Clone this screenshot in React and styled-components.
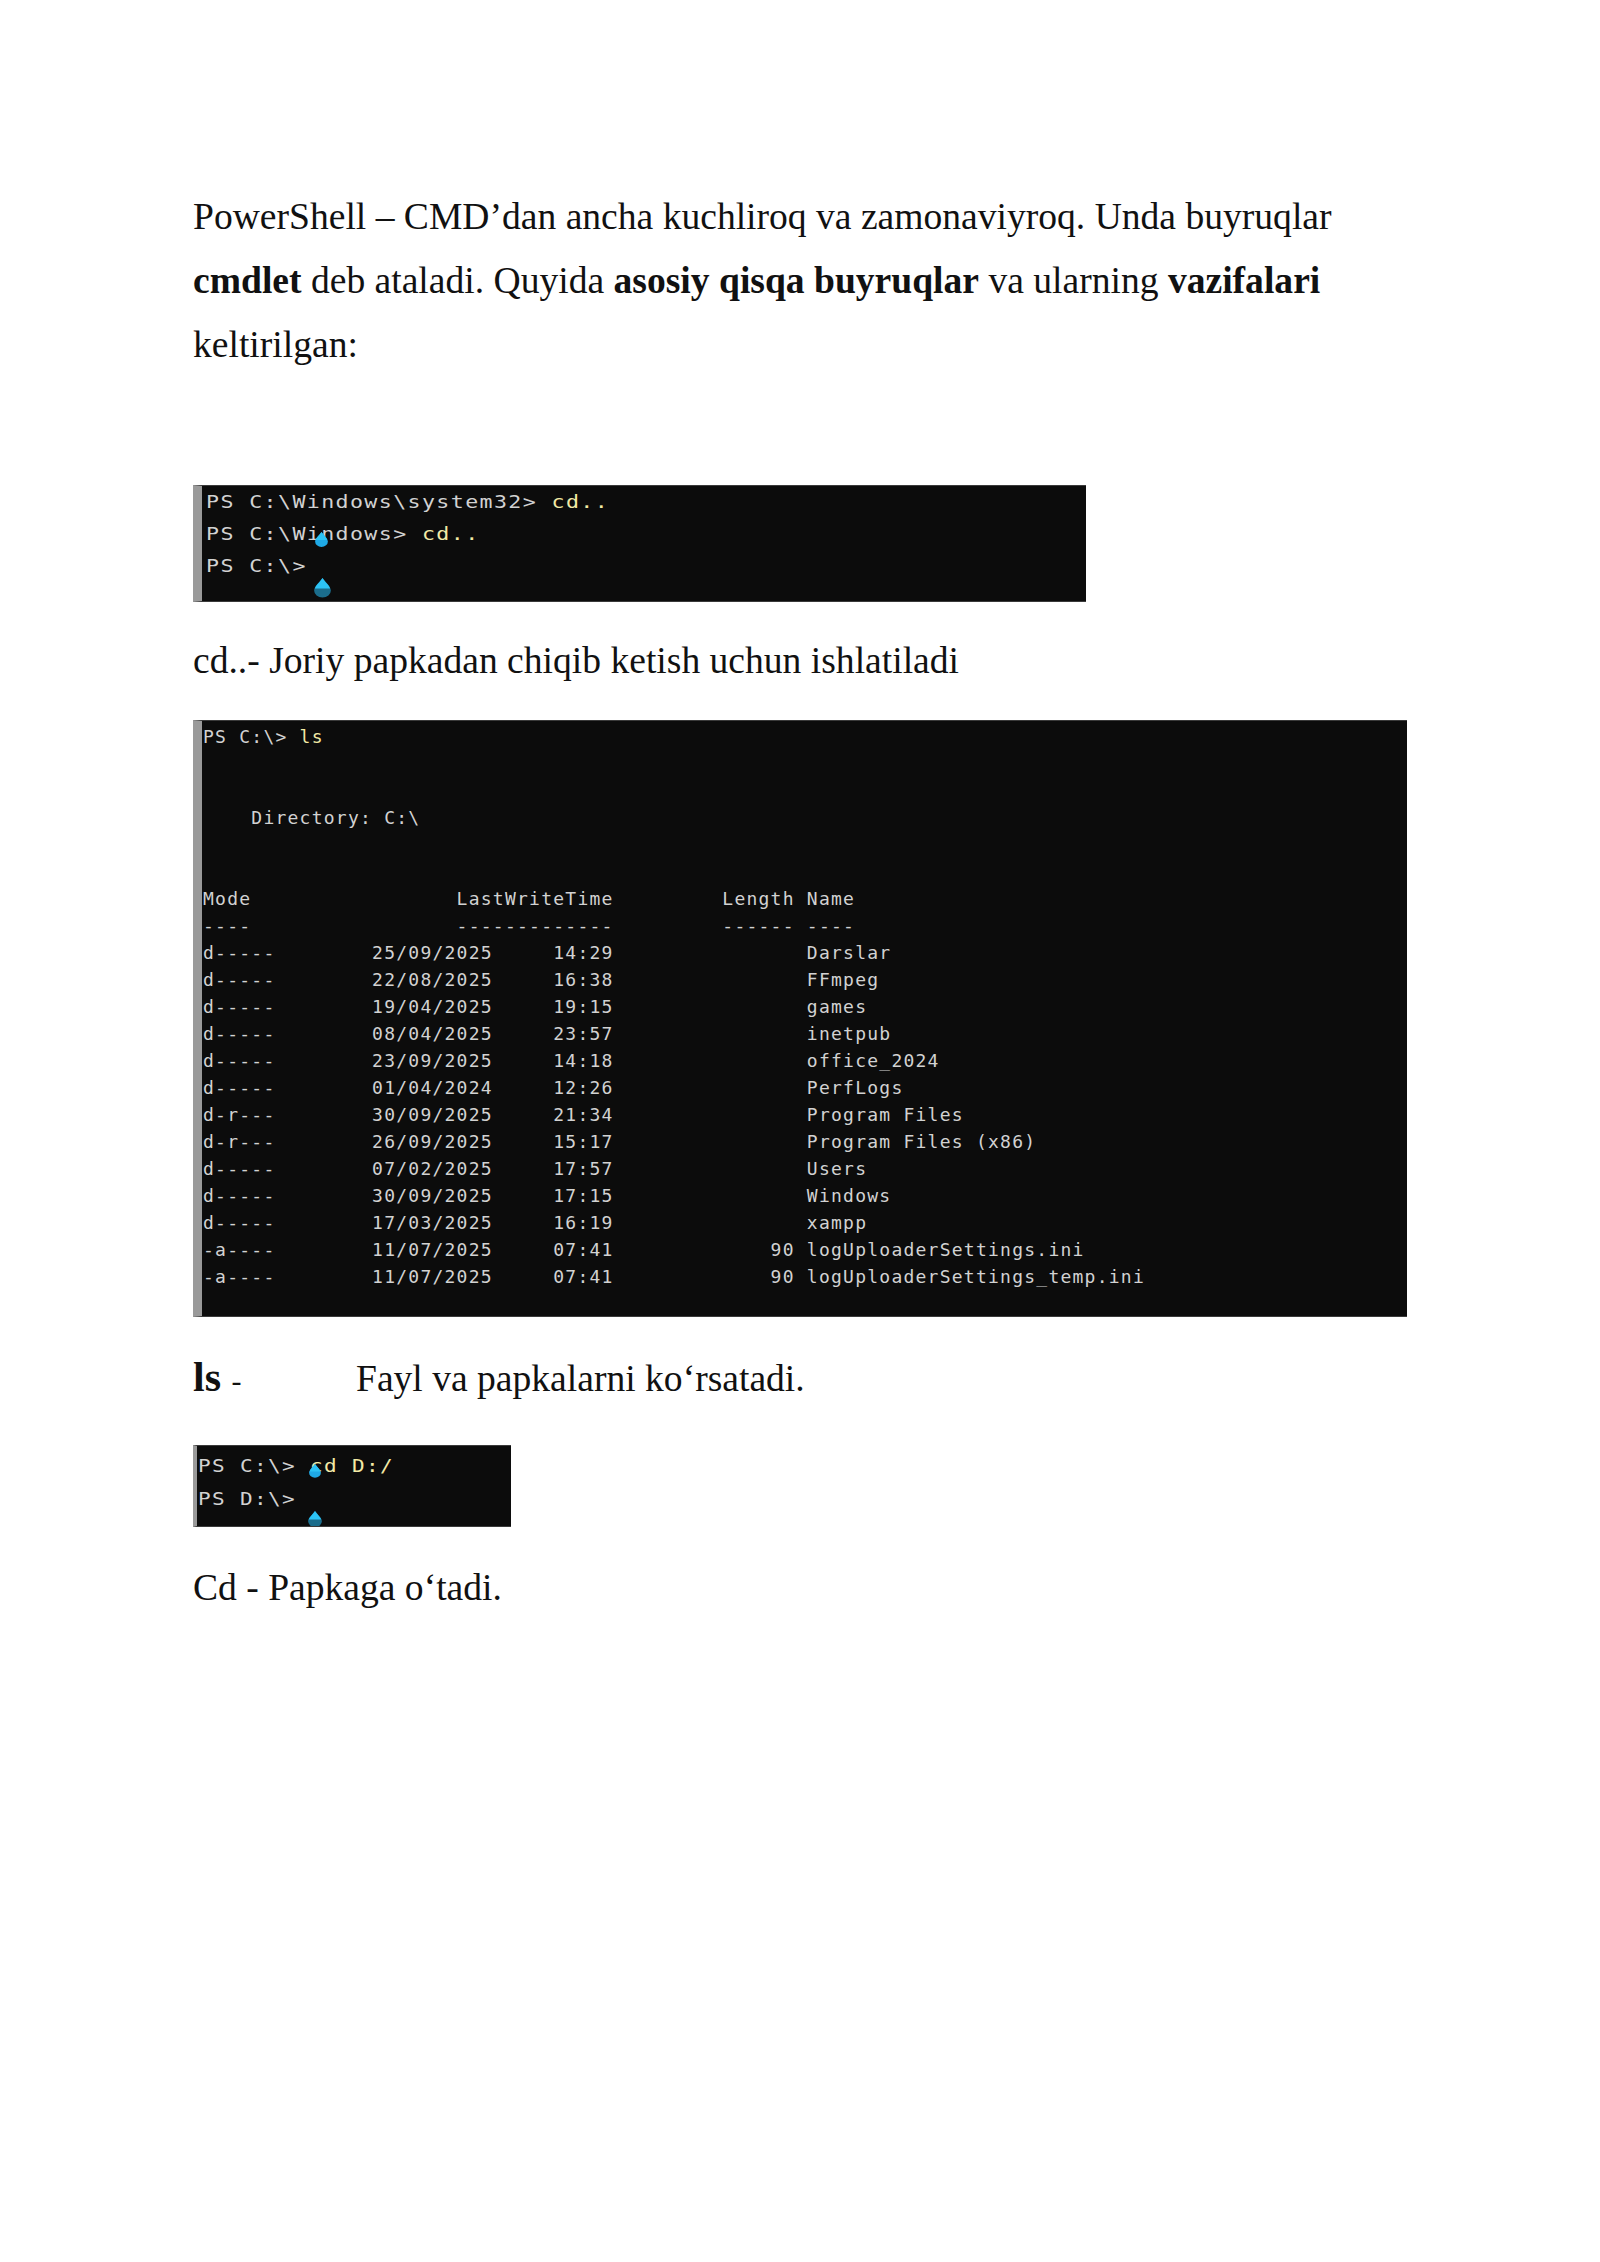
import React from "react";
import styled, { createGlobalStyle } from "styled-components";

const GlobalStyle = createGlobalStyle`
  html, body {
    margin: 0;
    padding: 0;
    background: #fff;
  }
  body {
    font-family: "Liberation Serif", "Times New Roman", serif;
    color: #111;
  }
`;

const termBg = "#0c0c0c";
const termText = "#d2d2d2";
const cmdText = "#f3eaa6";

const dirRows = [
  ["d-----", "25/09/2025", "14:29", "", "Darslar"],
  ["d-----", "22/08/2025", "16:38", "", "FFmpeg"],
  ["d-----", "19/04/2025", "19:15", "", "games"],
  ["d-----", "08/04/2025", "23:57", "", "inetpub"],
  ["d-----", "23/09/2025", "14:18", "", "office_2024"],
  ["d-----", "01/04/2024", "12:26", "", "PerfLogs"],
  ["d-r---", "30/09/2025", "21:34", "", "Program Files"],
  ["d-r---", "26/09/2025", "15:17", "", "Program Files (x86)"],
  ["d-----", "07/02/2025", "17:57", "", "Users"],
  ["d-----", "30/09/2025", "17:15", "", "Windows"],
  ["d-----", "17/03/2025", "16:19", "", "xampp"],
  ["-a----", "11/07/2025", "07:41", "90", "logUploaderSettings.ini"],
  ["-a----", "11/07/2025", "07:41", "90", "logUploaderSettings_temp.ini"],
];

function formatRow([mode, date, time, len, name]) {
  return mode.padEnd(14) + date + "     " + time + len.padStart(15) + " " + name;
}

// touch marker left on the screenshot
function Drop({ x, y, size = 14, dim }) {
  return (
    <DropMark style={{ left: x, top: y }}>
      <svg width={size} height={size * 1.15} viewBox="0 0 12 14">
        <path
          d="M6 0 C8 3 12 6 12 9 A6 5 0 0 1 0 9 C0 6 4 3 6 0 Z"
          fill={dim ? "#1b6d8c" : "#1fa9e6"}
        />
        <path d="M6 0 C8 3 11 5.5 11.5 7.5 L0.5 7.5 C1 5.5 4 3 6 0 Z" fill="#2cc3f5" />
      </svg>
    </DropMark>
  );
}

function Prompt({ path, cmd, stretch }) {
  return (
    <Line $stretch={stretch}>
      {"PS " + path + ">"}
      {cmd && <Cmd>{" " + cmd}</Cmd>}
    </Line>
  );
}

export default function App() {
  return (
    <Page>
      <GlobalStyle />

      <Para>
        PowerShell – CMD’dan ancha kuchliroq va zamonaviyroq. Unda buyruqlar{" "}
        <b>cmdlet</b> deb ataladi. Quyida <b>asosiy qisqa buyruqlar</b> va
        ularning <b>vazifalari</b> keltirilgan:
      </Para>

      <Terminal $width={893} $height={117} $gap={108} $strip={9} $pad={4} $lh={32}>
        <Prompt path="C:\Windows\system32" cmd="cd.." stretch={1.2} />
        <Prompt path="C:\Windows" cmd="cd.." stretch={1.2} />
        <Prompt path="C:\" stretch={1.2} />
        <Drop x={113} y={46} size={13} />
        <Drop x={112} y={92} size={17} dim />
      </Terminal>

      <Caption $gap={27}>cd..- Joriy papkadan chiqib ketish uchun ishlatiladi</Caption>

      <Terminal
        $width={1214}
        $height={597}
        $gap={27}
        $strip={9}
        $pad={1}
        $lh={27}
        $padTop={2}
        $spacing={1.24}
      >
        <Prompt path="C:\" cmd="ls" />
        <Line> </Line>
        <Line> </Line>
        <Line>{"    Directory: C:\\"}</Line>
        <Line> </Line>
        <Line> </Line>
        <Line>{"Mode".padEnd(21) + "LastWriteTime" + "         Length Name"}</Line>
        <Line>{"----".padEnd(21) + "-------------" + "         ------ ----"}</Line>
        {dirRows.map((r) => (
          <Line key={r[4]}>{formatRow(r)}</Line>
        ))}
      </Terminal>

      <TermRow>
        <Key>
          ls <Dash>-</Dash>
        </Key>
        <Desc>Fayl va papkalarni ko‘rsatadi.</Desc>
      </TermRow>

      <Terminal $width={318} $height={82} $gap={32} $strip={4} $pad={1} $lh={33} $padTop={3}>
        <Prompt path="C:\" cmd="cd D:/" stretch={1.167} />
        <Prompt path="D:\" stretch={1.167} />
        <Drop x={112} y={18} size={12} />
        <Drop x={111} y={65} size={14} dim />
      </Terminal>

      <Caption $gap={29}>Cd - Papkaga o‘tadi.</Caption>
    </Page>
  );
}

const Page = styled.main`
  width: 1214px;
  padding: 185px 0 600px 193px;
  font-size: 37.6px;
  line-height: 64px;
`;

const Para = styled.p`
  margin: 0;
`;

const Caption = styled.p`
  margin: ${(p) => p.$gap}px 0 0;
`;

const Terminal = styled.div`
  position: relative;
  box-sizing: border-box;
  width: ${(p) => p.$width}px;
  height: ${(p) => p.$height}px;
  margin-top: ${(p) => p.$gap}px;
  padding: ${(p) => p.$padTop || 0}px 0 0 ${(p) => p.$pad}px;
  background: ${termBg};
  border-left: ${(p) => p.$strip}px solid #9a9a9a;
  border-top: 1px solid #3a3a3a;
  border-bottom: 1px solid #3a3a3a;
  color: ${termText};
  font-family: "DejaVu Sans Mono", "Liberation Mono", monospace;
  font-size: 18px;
  line-height: ${(p) => p.$lh}px;
  letter-spacing: ${(p) => p.$spacing || 1.16}px;
  overflow: hidden;
`;

const Line = styled.div`
  white-space: pre;
  transform: scaleX(${(p) => p.$stretch || 1});
  transform-origin: left center;
`;

const Cmd = styled.span`
  color: ${cmdText};
`;

const DropMark = styled.span`
  position: absolute;
  line-height: 0;
`;

const TermRow = styled.div`
  display: flex;
  align-items: baseline;
  margin-top: 28px;
`;

const Key = styled.span`
  width: 163px;
  font-weight: bold;
  font-size: 42px;
`;

const Dash = styled.span`
  font-weight: normal;
  font-size: 30px;
`;

const Desc = styled.span``;
